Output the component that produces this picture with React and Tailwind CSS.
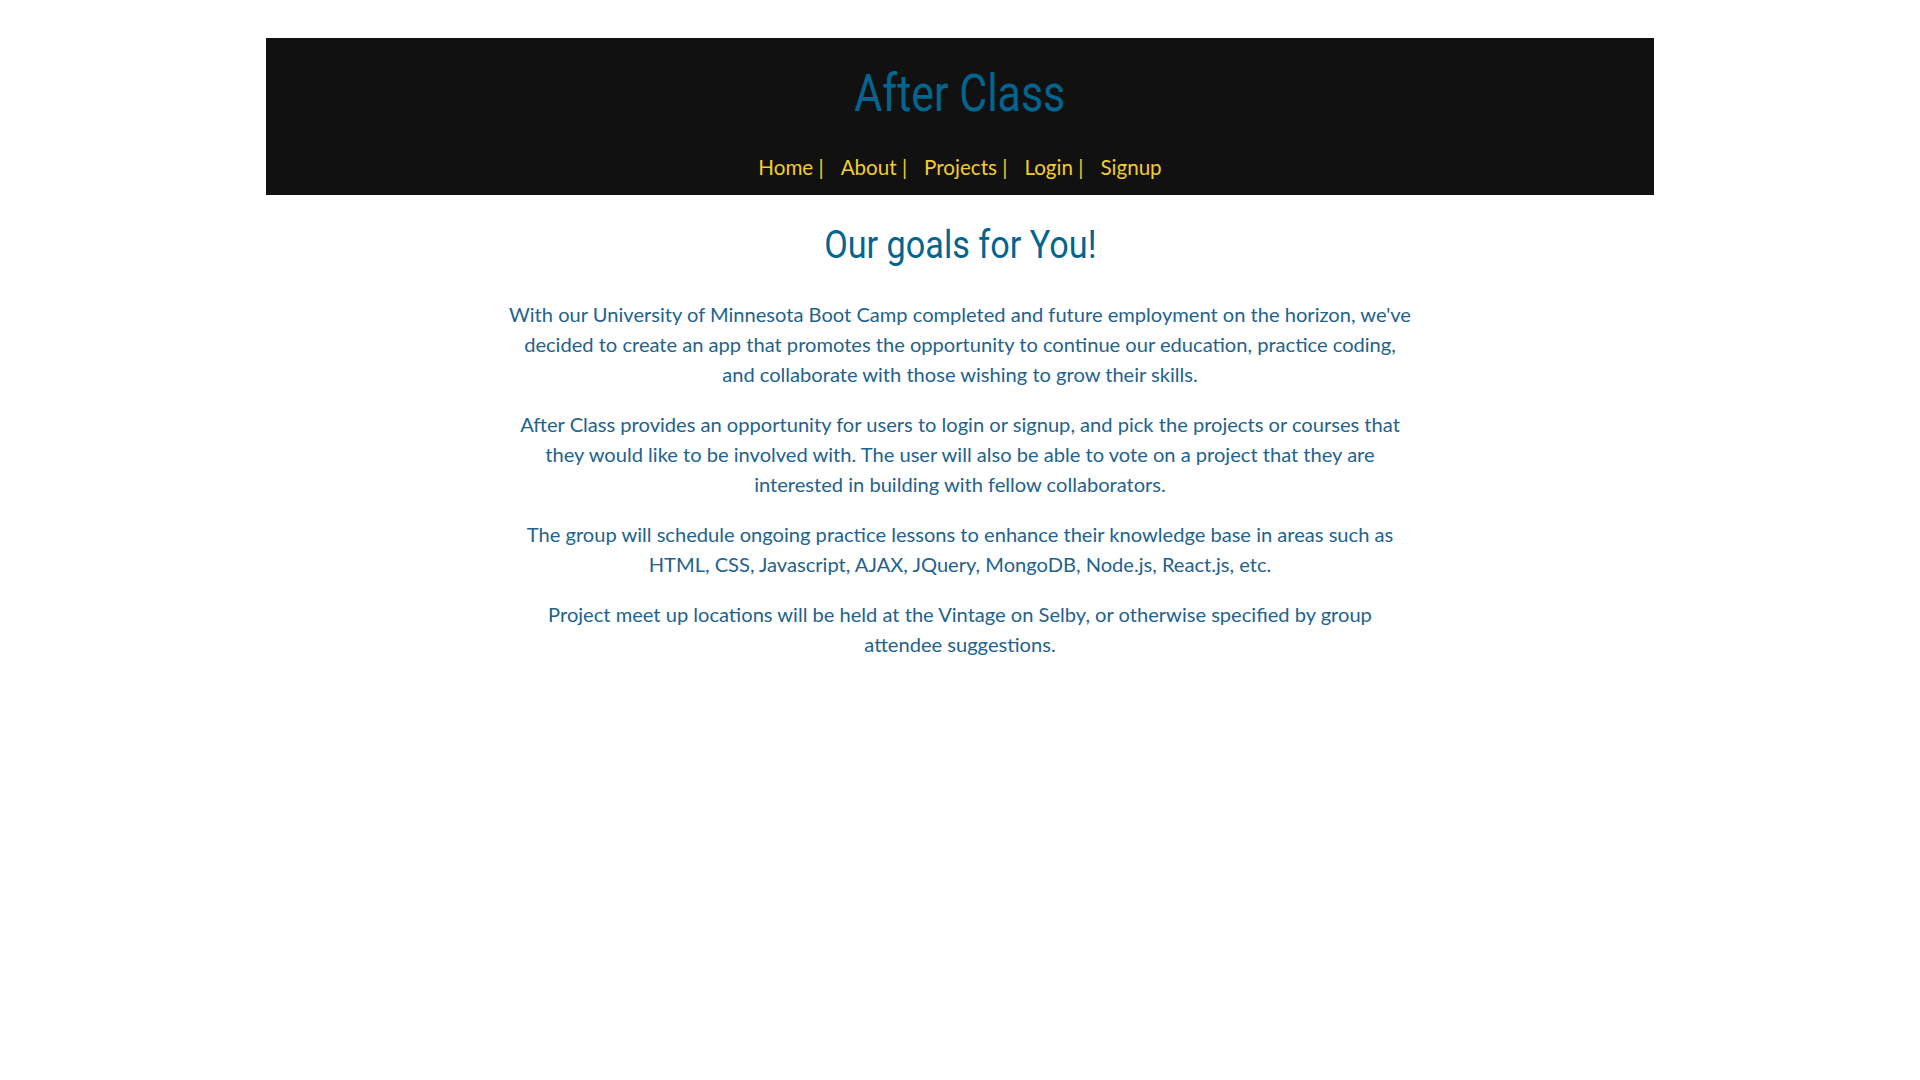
export default function App() {
  const paras = [
    "With our University of Minnesota Boot Camp completed and future employment on the horizon, we've decided to create an app that promotes the opportunity to continue our education, practice coding, and collaborate with those wishing to grow their skills.",
    "After Class provides an opportunity for users to login or signup, and pick the projects or courses that they would like to be involved with. The user will also be able to vote on a project that they are interested in building with fellow collaborators.",
    "The group will schedule ongoing practice lessons to enhance their knowledge base in areas such as HTML, CSS, Javascript, AJAX, JQuery, MongoDB, Node.js, React.js, etc.",
    "Project meet up locations will be held at the Vintage on Selby, or otherwise specified by group attendee suggestions.",
  ];
  const links = ["Home |", "About |", "Projects |", "Login |", "Signup"];
  return (
    <div className="min-h-screen bg-white pt-[38px]">
      <header className="mx-auto flex h-[157px] w-[1388px] flex-col items-center bg-[#111111] pt-[26px]">
        <h1 className="h-[60px] text-[52px] leading-[60px] text-[#02658f] [font-family:Roboto,'Liberation_Sans',sans-serif]">
          <span className="inline-block scale-x-[0.825]">After Class</span>
        </h1>
        <nav className="mt-[31px] flex gap-[17px] text-[20.6px] leading-[24px] text-[#f2cd2c] [font-family:Lato,'Liberation_Sans',sans-serif]">
          {links.map((l) => (
            <a key={l} href="#" className="whitespace-pre">
              {l}
            </a>
          ))}
        </nav>
      </header>
      <main className="mx-auto flex w-[903px] flex-col items-center pt-[28px]">
        <h2 className="h-[44px] text-[38px] leading-[44px] text-[#02658f] [font-family:Roboto,'Liberation_Sans',sans-serif]">
          <span className="inline-block scale-x-[0.9]">Our goals for You!</span>
        </h2>
        <div className="mt-[32px] flex flex-col gap-[20px] text-center text-[20.1px] leading-[30px] text-[#22628e] [font-family:Lato,'Liberation_Sans',sans-serif]">
          {paras.map((p, i) => (
            <p key={i}>{p}</p>
          ))}
        </div>
      </main>
    </div>
  );
}
